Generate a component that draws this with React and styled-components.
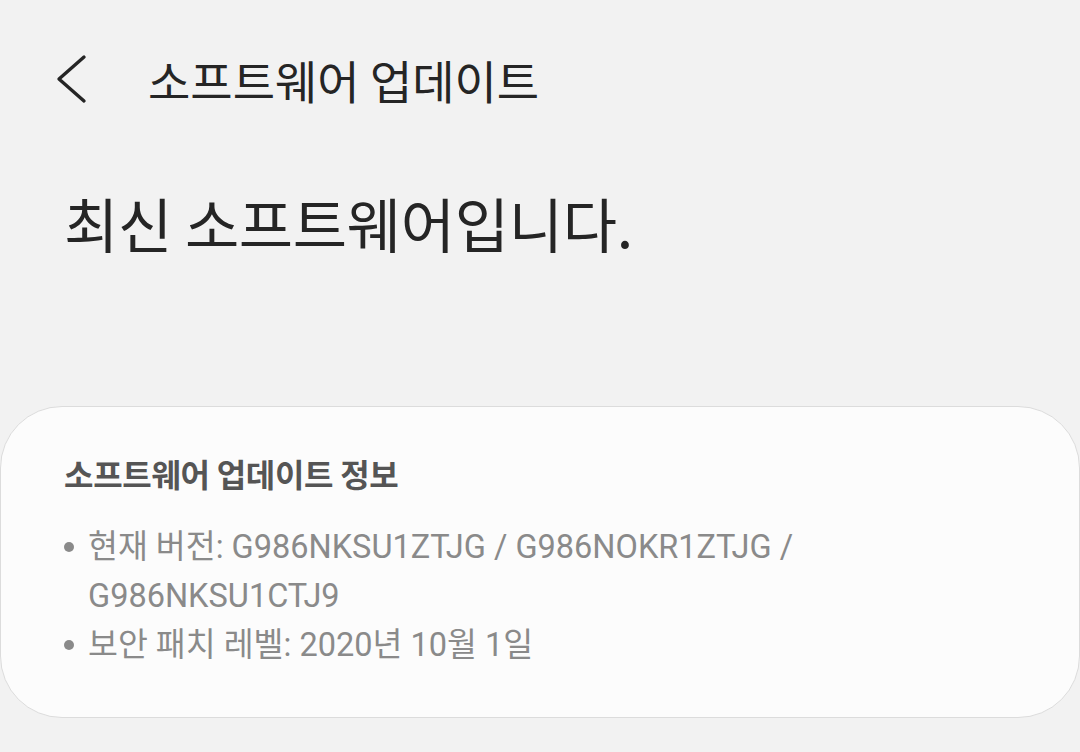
import React from "react";
import styled, { createGlobalStyle } from "styled-components";

const Global = createGlobalStyle`
  html, body {
    margin: 0;
    padding: 0;
    background: #f2f2f2;
  }
  body {
    font-family: "Roboto", "Noto Sans CJK KR", sans-serif;
  }
`;

const Page = styled.div`
  width: 1080px;
  height: 752px;
  background: #f2f2f2;
  display: flex;
  flex-direction: column;
  overflow: hidden;
`;

const Header = styled.header`
  height: 158px;
  display: flex;
  align-items: center;
  padding-left: 54px;
  gap: 58px;
  box-sizing: border-box;
`;

const BackButton = styled.button`
  border: none;
  background: none;
  padding: 0;
  width: 36px;
  height: 52px;
  display: flex;
  align-items: center;
  justify-content: center;
  color: #252525;
`;

const HeaderTitle = styled.h1`
  margin: 0;
  font-family: "Noto Sans CJK KR", sans-serif;
  font-weight: 400;
  font-size: 46px;
  color: #252525;
  line-height: 1;
`;

const Status = styled.h2`
  margin: 30px 0 0 64px;
  font-family: "Noto Sans CJK KR", sans-serif;
  font-weight: 400;
  font-size: 59px;
  line-height: 1.2;
  color: #252525;
  letter-spacing: -0.3px;
`;

const Card = styled.section`
  margin-top: auto;
  margin-bottom: 34px;
  height: 312px;
  box-sizing: border-box;
  background: #fcfcfc;
  border: 1px solid #dcdcdc;
  border-radius: 62px;
  padding: 46px 64px 0 63px;
`;

const CardTitle = styled.h3`
  margin: 0 0 28px;
  font-family: "Noto Sans CJK KR", sans-serif;
  font-weight: 700;
  font-size: 32px;
  line-height: 1.3;
  color: #555555;
  letter-spacing: -0.3px;
`;

const List = styled.ul`
  list-style: none;
  margin: 0;
  padding: 0;
  display: flex;
  flex-direction: column;
`;

const Item = styled.li`
  display: flex;
  align-items: flex-start;
  font-size: 32.5px;
  line-height: 49px;
  color: #8a8a8a;
`;

const Bullet = styled.span`
  flex: 0 0 24px;
  height: 49px;
  display: flex;
  align-items: center;
  &::before {
    content: "";
    width: 10px;
    height: 10px;
    border-radius: 50%;
    background: #8a8a8a;
  }
`;

const ItemText = styled.span`
  flex: 1;
`;

export default function App() {
  return (
    <Page>
      <Global />
      <Header>
        <BackButton aria-label="뒤로">
          <svg width="36" height="52" viewBox="0 0 36 52" fill="none">
            <path
              d="M30 4 L5 26 L30 48"
              stroke="#252525"
              strokeWidth="3.4"
              strokeLinecap="round"
              strokeLinejoin="round"
            />
          </svg>
        </BackButton>
        <HeaderTitle>소프트웨어 업데이트</HeaderTitle>
      </Header>
      <Status>최신 소프트웨어입니다.</Status>
      <Card>
        <CardTitle>소프트웨어 업데이트 정보</CardTitle>
        <List>
          <Item>
            <Bullet />
            <ItemText>
              현재 버전: G986NKSU1ZTJG / G986NOKR1ZTJG / G986NKSU1CTJ9
            </ItemText>
          </Item>
          <Item>
            <Bullet />
            <ItemText>보안 패치 레벨: 2020년 10월 1일</ItemText>
          </Item>
        </List>
      </Card>
    </Page>
  );
}
